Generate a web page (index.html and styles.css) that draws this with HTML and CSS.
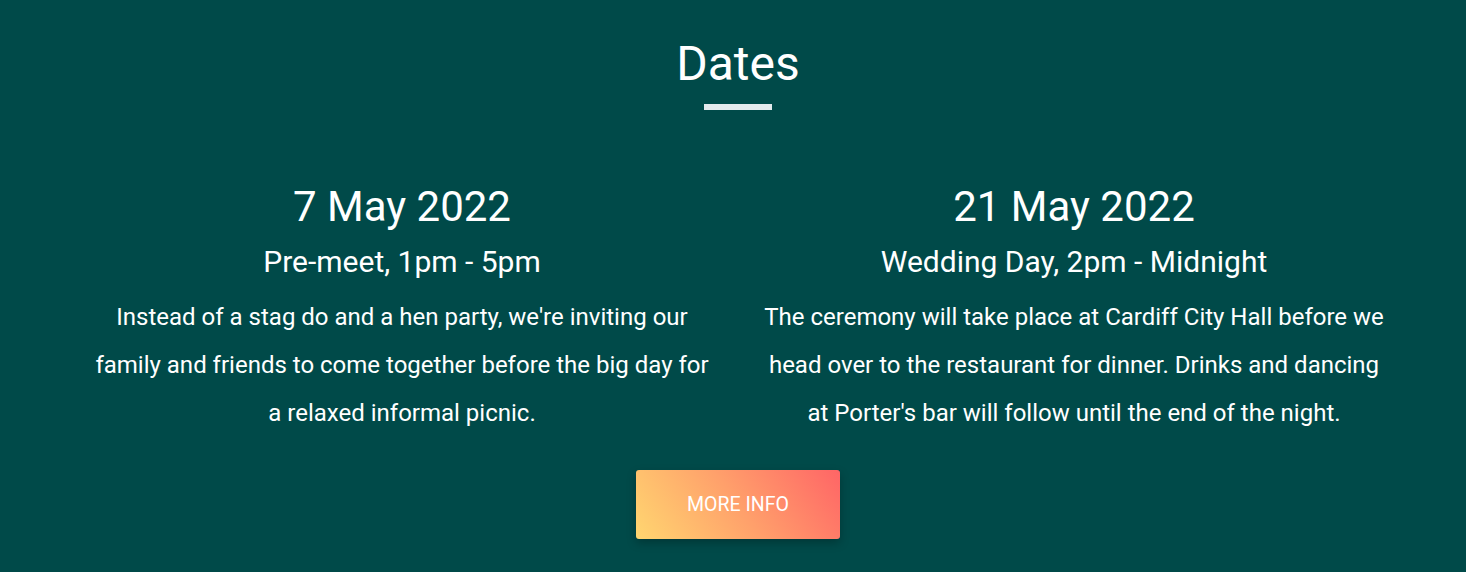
FILE: index.html
```html
<!DOCTYPE html>
<html lang="en">
<head>
<meta charset="utf-8">
<title>Dates</title>
<link rel="stylesheet" href="styles.css">
</head>
<body>
<section class="dates">
  <h2 class="dates-title">Dates</h2>
  <div class="title-rule"></div>
  <div class="dates-grid">
    <div class="date-col">
      <h3 class="date-heading">7 May 2022</h3>
      <h4 class="date-sub">Pre-meet, 1pm - 5pm</h4>
      <p class="date-text">Instead of a stag do and a hen party, we're inviting our family and friends to come together before the big day for a relaxed informal picnic.</p>
    </div>
    <div class="date-col">
      <h3 class="date-heading">21 May 2022</h3>
      <h4 class="date-sub">Wedding Day, 2pm - Midnight</h4>
      <p class="date-text">The ceremony will take place at Cardiff City Hall before we head over to the restaurant for dinner. Drinks and dancing at Porter's bar will follow until the end of the night.</p>
    </div>
  </div>
  <div class="actions">
    <a class="btn-more" href="#">More info</a>
  </div>
</section>
</body>
</html>
```
FILE: styles.css
```css
html, body {
  margin: 0;
  padding: 0;
}
body {
  background: #004a49;
  font-family: Roboto, "Liberation Sans", sans-serif;
  color: #ffffff;
  height: 572px;
  overflow: hidden;
}
.dates {
  padding: 36px 0 0 10px;
  display: flex;
  flex-direction: column;
  align-items: center;
}
.dates-title {
  margin: 0;
  font-size: 48px;
  font-weight: 400;
  line-height: 56px;
}
.title-rule {
  width: 68px;
  height: 6px;
  background: #e3eaed;
  margin-top: 12px;
}
.dates-grid {
  display: grid;
  grid-template-columns: 672px 672px;
  margin-top: 72px;
}
.date-col {
  padding: 0 22px;
  text-align: center;
}
.date-heading {
  margin: 0;
  font-size: 42px;
  font-weight: 400;
  line-height: 50px;
}
.date-sub {
  margin: 12px 0 0;
  font-size: 30px;
  font-weight: 400;
  line-height: 36px;
}
.date-text {
  margin: 13px 0 0;
  font-size: 24px;
  line-height: 48px;
}
.actions {
  margin-top: 33px;
}
.btn-more {
  display: flex;
  align-items: center;
  justify-content: center;
  width: 204px;
  height: 69px;
  border-radius: 3px;
  background: linear-gradient(55deg, #ffd670 0%, #ffa06b 50%, #ff6566 100%);
  box-shadow: 0 4px 10px rgba(0, 0, 0, 0.25);
  color: #ffffff;
  text-decoration: none;
  text-transform: uppercase;
  font-size: 19.5px;
}
```
